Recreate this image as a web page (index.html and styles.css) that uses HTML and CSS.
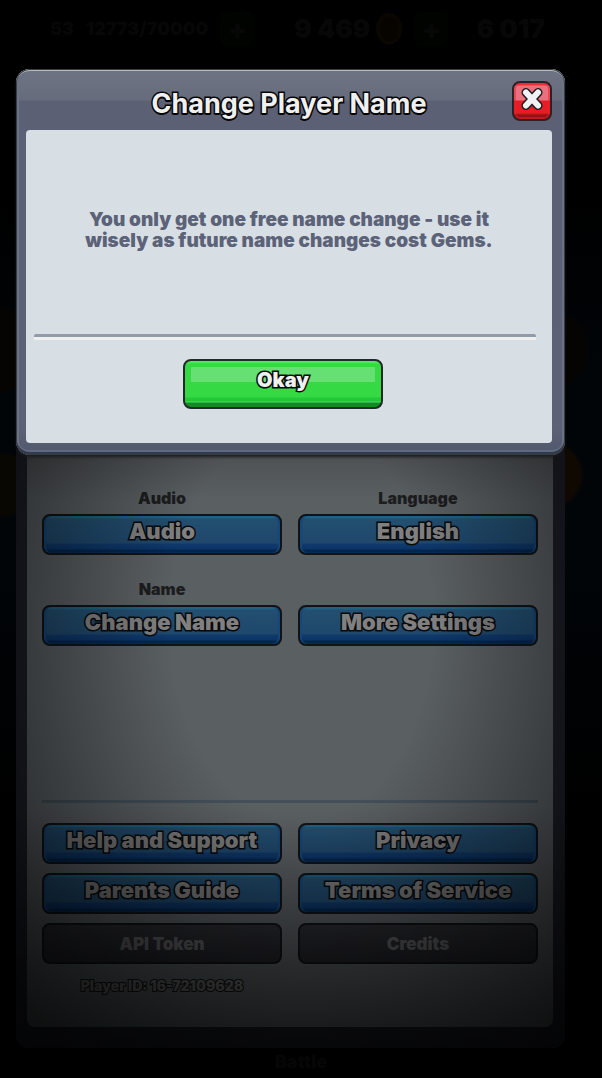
FILE: index.html
```html
<!DOCTYPE html>
<html lang="en">
<head>
    <meta charset="UTF-8">
    <meta name="viewport" content="width=device-width, initial-scale=1.0">
    <title>Change Player Name</title>

    <link rel="stylesheet" href="styles.css">
</head>
<body>

    <header class="hud">
        <span class="level">53</span>
        <span class="xp">12773/70000</span>
        <span class="plus">+</span>
        <span class="gold">9 469</span>
        <span class="coin"></span>
        <span class="plus">+</span>
        <span class="gems">6 017</span>
    </header>

    <main class="stage">
        <section class="dialog" role="dialog" aria-labelledby="dialog-title">
            <div class="dialog-header">
                <h1 id="dialog-title">Change Player Name</h1>
                <button class="close-btn" aria-label="Close">
                    <svg viewBox="0 0 24 24" width="24" height="24">
                        <path class="cross-line" d="M6 5.5 18 18.5M18 5.5 6 18.5"/>
                        <path class="cross-fill" d="M6 5.5 18 18.5M18 5.5 6 18.5"/>
                    </svg>
                </button>
            </div>
            <div class="dialog-body">
                <p class="message">You only get one free name change - use it wisely as future name changes cost Gems.</p>
                <div class="dialog-actions">
                    <button class="okay-btn">Okay</button>
                </div>
            </div>
        </section>

        <section class="settings">
            <div class="settings-body">
                <div class="options">
                    <div class="field">
                        <label for="audio">Audio</label>
                        <button class="btn" id="audio">Audio</button>
                    </div>
                    <div class="field">
                        <label for="language">Language</label>
                        <button class="btn" id="language">English</button>
                    </div>
                    <div class="field">
                        <label for="name">Name</label>
                        <button class="btn" id="name">Change Name</button>
                    </div>
                    <div class="field">
                        <button class="btn">More Settings</button>
                    </div>
                </div>

                <div class="links">
                    <button class="btn">Help and Support</button>
                    <button class="btn">Privacy</button>
                    <button class="btn">Parents Guide</button>
                    <button class="btn">Terms of Service</button>
                    <button class="btn btn-grey">API Token</button>
                    <button class="btn btn-grey">Credits</button>
                    <p class="player-id">Player ID: 16-72109628</p>
                </div>
            </div>
        </section>
    </main>

    <footer class="tab">Battle</footer>

</body>
</html>
```

FILE: styles.css
```css
* {
    box-sizing: border-box;
}

body {
    font-family: Inter, "Open Sans", sans-serif;
    font-weight: 900;
    margin: 0;
    min-height: 100vh;
    background:
        radial-gradient(circle at 0 350px, #060402 40px, transparent 44px),
        radial-gradient(circle at 0 485px, #090702 30px, transparent 34px),
        radial-gradient(circle at 550px 350px, #060402 36px, transparent 40px),
        radial-gradient(circle at 550px 475px, #100902 30px, transparent 34px),
        linear-gradient(#000000 200px, #010508 380px, #010508 560px, #000000 800px);
}

button {
    font-family: inherit;
    font-weight: 900;
    cursor: pointer;
}

h1, p {
    margin: 0;
}

/* top bar */
.hud {
    display: flex;
    align-items: center;
    gap: 12px;
    height: 69px;
    padding: 0 50px 12px;
    font-size: 18px;
    color: #070707;
    overflow: hidden;
    white-space: nowrap;
}

.gold {
    margin-left: 28px;
    font-size: 26px;
}

.gems {
    margin-left: 16px;
    font-size: 26px;
}

.plus {
    width: 34px;
    border-radius: 6px;
    background: #010301;
    font-size: 28px;
    line-height: 34px;
    text-align: center;
}

.coin {
    flex: none;
    width: 26px;
    height: 32px;
    margin-left: -6px;
    border: 4px solid #0a0601;
    border-radius: 50%;
    background: #070400;
}

.stage {
    padding: 0 37px 0 16px;
}

/* dialog */
.dialog {
    position: relative;
    z-index: 1;
    padding: 0 13px 12px 10px;
    border-radius: 14px;
    background: linear-gradient(#6e7484, #676c7c 31px, #5c6074 32px, #5c6176 360px, #4f586b);
    box-shadow:
        inset 0 0 0 1px #3a3b3f,
        inset 0 2px 0 #b9bbbd,
        inset 0 -3px 0 #303b4c,
        inset 0 -5px 0 #606980,
        inset 0 0 0 3px #6a7287,
        0 2px 3px #1c1c1c;
}

.dialog-header {
    display: flex;
    align-items: center;
    justify-content: center;
    height: 61px;
    padding-top: 8px;
}

.dialog-header h1 {
    font-size: 27px;
    line-height: 32px;
    color: #f0f0f0;
    -webkit-text-stroke: 3px #050505;
    paint-order: stroke fill;
    text-shadow: 0 2px 0 #050505;
}

.close-btn {
    position: absolute;
    top: 12px;
    right: 13px;
    width: 40px;
    height: 40px;
    padding: 0 0 5px;
    border: 2px solid #2a2226;
    border-radius: 8px;
    background: linear-gradient(#f0364c 2px, #e9707c 3px, #e9707c 17px, #e61d24 18px, #e61d24 30px, #981112 32px);
    box-shadow: inset 0 0 0 2px rgba(240, 30, 45, 0.5);
}

.close-btn svg {
    display: block;
    margin: auto;
}

.close-btn path {
    fill: none;
    stroke-linecap: round;
}

.cross-line {
    stroke: #1c1c20;
    stroke-width: 9;
}

.cross-fill {
    stroke: #f2f2f4;
    stroke-width: 6;
}

.dialog-body {
    padding-bottom: 34px;
    border-radius: 4px;
    background: #d7dfe5;
}

.message {
    display: flex;
    align-items: center;
    height: 204px;
    max-width: 440px;
    margin: 0 auto;
    padding-bottom: 4px;
    font-size: 19px;
    line-height: 21px;
    text-align: center;
    color: #5c6277;
}

.dialog-actions {
    margin: 0 16px 0 8px;
    padding: 20px 4px 0 0;
    border-top: 3px solid #939ba9;
    border-radius: 2px;
    box-shadow: inset 0 3px 0 #eef0ef;
    text-align: center;
}

.okay-btn {
    width: 200px;
    height: 50px;
    margin-top: 2px;
    padding: 0 0 8px;
    border: 2px solid #22282a;
    border-radius: 8px;
    background:
        linear-gradient(#66df73, #66df73) center 6px / 184px 15px no-repeat,
        linear-gradient(#4ced5b 1px, #35d944 3px, #35d944 36px, #22c935 37px, #22c935 40px, #3ce650 41px, #148a27 42px);
    font-size: 20px;
    color: #f0f0f0;
    -webkit-text-stroke: 3px #050505;
    paint-order: stroke fill;
    text-shadow: 0 1px 0 #050505;
}

/* settings panel, dimmed behind the dialog */
.settings {
    position: relative;
    margin-top: -16px;
    padding: 0 12px 21px 11px;
    border-radius: 14px;
    background: #1e2029;
    overflow: hidden;
}

.settings::after {
    content: "";
    position: absolute;
    inset: 0;
    background:
        linear-gradient(transparent 60%, rgba(0, 0, 0, 0.6)),
        radial-gradient(ellipse 68% 92% at 52% 30%, transparent 35%, rgba(0, 0, 0, 0.3) 65%, rgba(0, 0, 0, 0.65) 100%);
    pointer-events: none;
}

.settings-body {
    padding: 48px 15px 28px;
    border-radius: 0 0 8px 8px;
    background: linear-gradient(#4e5254 18px, #5a5f62 60px);
}

.options,
.links {
    display: grid;
    grid-template-columns: 1fr 1fr;
    column-gap: 16px;
}

.options {
    row-gap: 23px;
    padding-bottom: 154px;
}

.field {
    display: flex;
    flex-direction: column;
    justify-content: flex-end;
}

.field label {
    font-size: 16px;
    line-height: 22px;
    padding-bottom: 5px;
    text-align: center;
    color: #1c1d1e;
}

.btn {
    height: 41px;
    padding: 0 0 8px;
    border: 2px solid #111316;
    border-radius: 8px;
    background: linear-gradient(#206887 1px, #234f70 3px, #1f486c 27px, #103a6c 28px, #0b3468 33px, #04264e 34px);
    box-shadow: inset 2px 0 1px #14477a, inset -2px 0 1px #14477a;
    font-size: 22px;
    line-height: 26px;
    color: #808080;
    -webkit-text-stroke: 3px #08090b;
    paint-order: stroke fill;
    text-shadow: 0 1px 0 #08090b;
}

.links {
    row-gap: 9px;
    padding-top: 20px;
    border-top: 3px solid #43505a;
}

.btn-grey {
    padding: 0;
    background: linear-gradient(#2e2f34, #23242a);
    box-shadow: none;
    font-size: 17px;
    color: #66676a;
    -webkit-text-stroke: 0;
    text-shadow: none;
}

.player-id {
    font-size: 14px;
    line-height: 26px;
    text-align: center;
    color: #6c6c6c;
    -webkit-text-stroke: 2px #131313;
    paint-order: stroke fill;
}

.tab {
    height: 30px;
    font-size: 18px;
    line-height: 28px;
    text-align: center;
    color: #060606;
}
```
